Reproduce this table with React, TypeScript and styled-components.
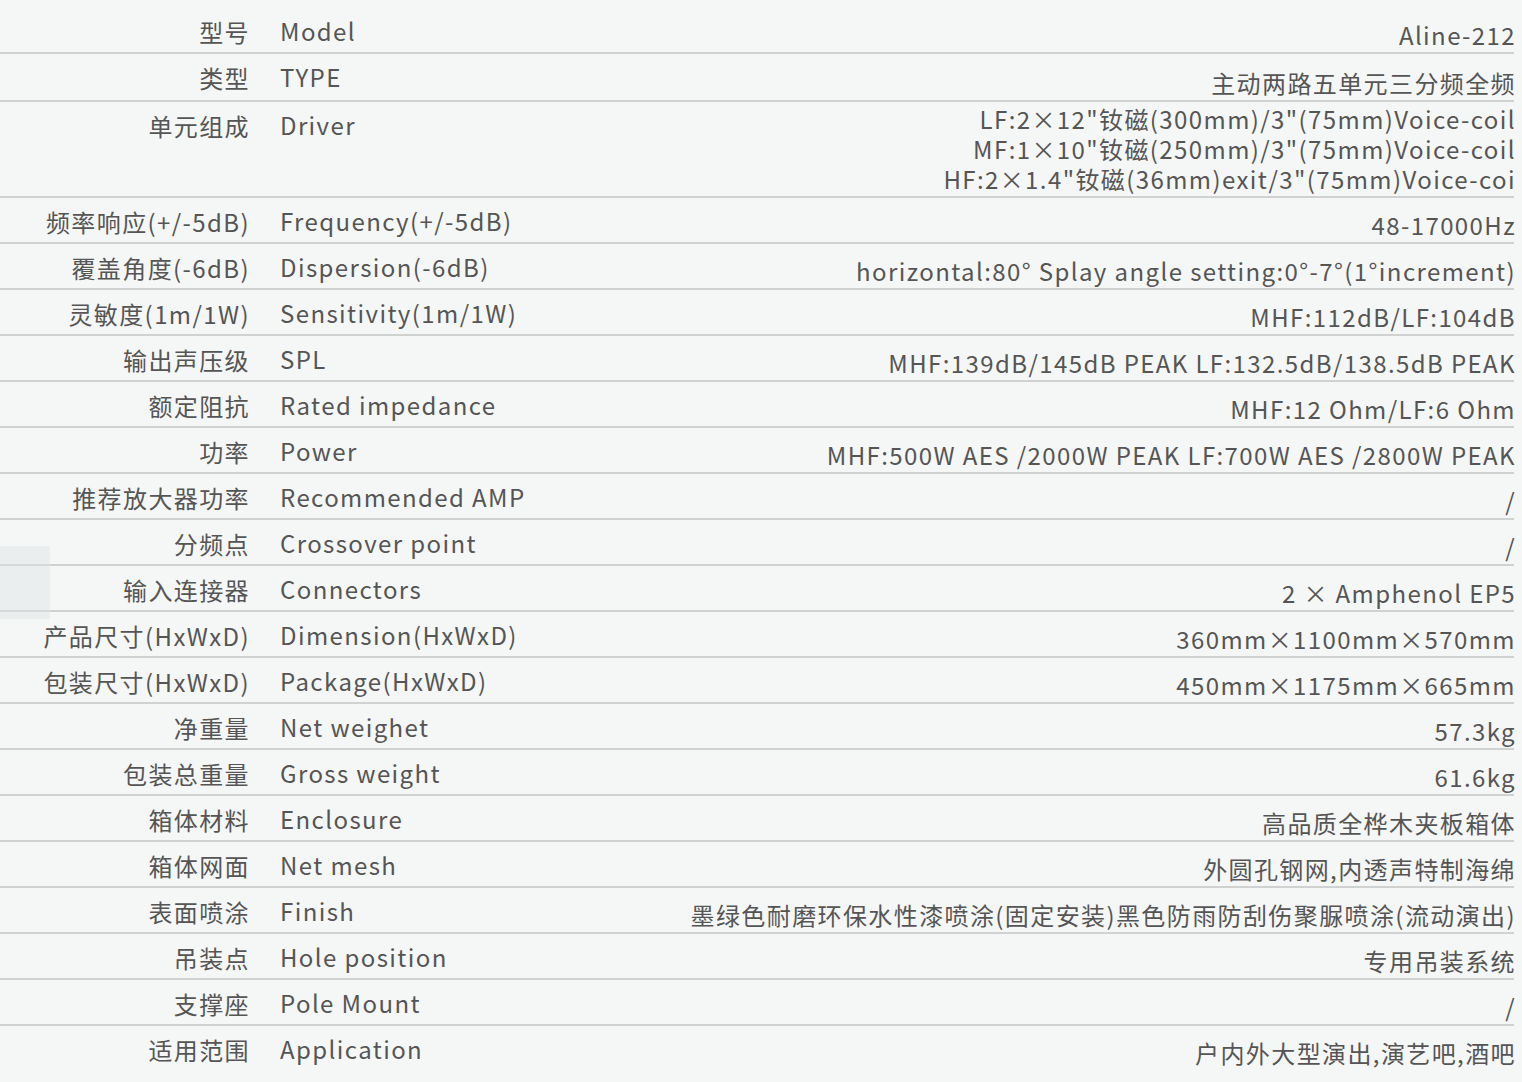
import styled, { createGlobalStyle } from "styled-components";

interface Spec {
  cn: string;
  en: string;
  value: string[];
  tall?: boolean;
}

const specs: Spec[] = [
  { cn: "型号", en: "Model", value: ["Aline-212"] },
  { cn: "类型", en: "TYPE", value: ["主动两路五单元三分频全频"], tall: true },
  {
    cn: "单元组成",
    en: "Driver",
    value: [
      "LF:2×12\"钕磁(300mm)/3\"(75mm)Voice-coil",
      "MF:1×10\"钕磁(250mm)/3\"(75mm)Voice-coil",
      "HF:2×1.4\"钕磁(36mm)exit/3\"(75mm)Voice-coi",
    ],
  },
  { cn: "频率响应(+/-5dB)", en: "Frequency(+/-5dB)", value: ["48-17000Hz"] },
  {
    cn: "覆盖角度(-6dB)",
    en: "Dispersion(-6dB)",
    value: ["horizontal:80° Splay angle setting:0°-7°(1°increment)"],
  },
  { cn: "灵敏度(1m/1W)", en: "Sensitivity(1m/1W)", value: ["MHF:112dB/LF:104dB"] },
  { cn: "输出声压级", en: "SPL", value: ["MHF:139dB/145dB PEAK LF:132.5dB/138.5dB PEAK"] },
  { cn: "额定阻抗", en: "Rated impedance", value: ["MHF:12 Ohm/LF:6 Ohm"] },
  { cn: "功率", en: "Power", value: ["MHF:500W AES /2000W PEAK LF:700W AES /2800W PEAK"] },
  { cn: "推荐放大器功率", en: "Recommended AMP", value: ["/"] },
  { cn: "分频点", en: "Crossover point", value: ["/"] },
  { cn: "输入连接器", en: "Connectors", value: ["2 × Amphenol EP5"] },
  { cn: "产品尺寸(HxWxD)", en: "Dimension(HxWxD)", value: ["360mm×1100mm×570mm"] },
  { cn: "包装尺寸(HxWxD)", en: "Package(HxWxD)", value: ["450mm×1175mm×665mm"] },
  { cn: "净重量", en: "Net weighet", value: ["57.3kg"] },
  { cn: "包装总重量", en: "Gross weight", value: ["61.6kg"] },
  { cn: "箱体材料", en: "Enclosure", value: ["高品质全桦木夹板箱体"] },
  { cn: "箱体网面", en: "Net mesh", value: ["外圆孔钢网,内透声特制海绵"] },
  {
    cn: "表面喷涂",
    en: "Finish",
    value: ["墨绿色耐磨环保水性漆喷涂(固定安装)黑色防雨防刮伤聚脲喷涂(流动演出)"],
  },
  { cn: "吊装点", en: "Hole position", value: ["专用吊装系统"] },
  { cn: "支撑座", en: "Pole Mount", value: ["/"] },
  { cn: "适用范围", en: "Application", value: ["户内外大型演出,演艺吧,酒吧"] },
];

const GlobalStyle = createGlobalStyle`
  html, body {
    margin: 0;
    padding: 0;
    background: #f5f7f7;
  }
  body {
    font-family: "Noto Sans CJK SC", "Noto Sans", sans-serif;
    color: #555;
  }
`;

const Page = styled.div`
  position: relative;
  width: 1522px;
  min-height: 1082px;
  padding-top: 8px;
  box-sizing: border-box;
`;

const Table = styled.div`
  width: 1514px;
  display: flex;
  flex-direction: column;
`;

const Row = styled.div<{ $last?: boolean; $tall?: boolean }>`
  display: grid;
  grid-template-columns: 250px 1fr auto;
  min-height: ${({ $tall }) => ($tall ? "46px" : "44px")};
  border-bottom: ${({ $last }) => ($last ? "none" : "2px solid #d0d2d2")};
  font-size: 24px;
  letter-spacing: 1.4px;
`;

const LabelCn = styled.div`
  text-align: right;
  line-height: 30px;
  padding-top: 9px;
  white-space: nowrap;
`;

const LabelEn = styled.div`
  padding-left: 30px;
  line-height: 30px;
  padding-top: 8px;
  white-space: nowrap;
`;

const Value = styled.div`
  align-self: end;
  text-align: right;
  line-height: 30px;
  padding-top: 2px;
  padding-bottom: 2px;
  white-space: nowrap;
  margin-right: -2px;
`;

const ValueLine = styled.div`
  line-height: 30px;
`;

const SideTab = styled.div`
  position: absolute;
  left: 0;
  top: 546px;
  width: 50px;
  height: 73px;
  background: rgba(225, 227, 227, 0.45);
`;

export default function App() {
  return (
    <>
      <GlobalStyle />
      <Page>
        <Table>
          {specs.map((s, i) => (
            <Row key={s.en} $last={i === specs.length - 1} $tall={s.tall}>
              <LabelCn>{s.cn}</LabelCn>
              <LabelEn>{s.en}</LabelEn>
              <Value>
                {s.value.map((v) => (
                  <ValueLine key={v}>{v}</ValueLine>
                ))}
              </Value>
            </Row>
          ))}
        </Table>
        <SideTab />
      </Page>
    </>
  );
}
